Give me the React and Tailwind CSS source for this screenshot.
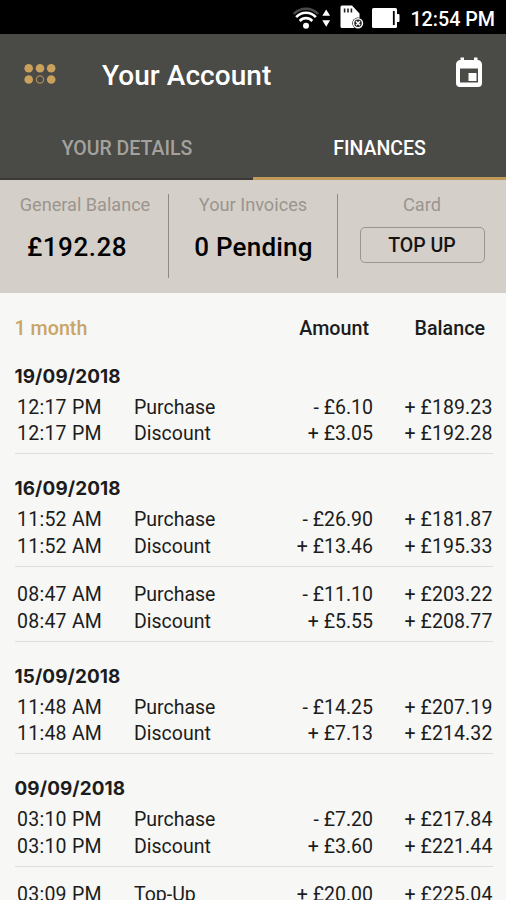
const groups = [
  {
    date: "19/09/2018",
    rows: [
      ["12:17 PM", "Purchase", "- £6.10", "+ £189.23"],
      ["12:17 PM", "Discount", "+ £3.05", "+ £192.28"],
    ],
  },
  {
    date: "16/09/2018",
    rows: [
      ["11:52 AM", "Purchase", "- £26.90", "+ £181.87"],
      ["11:52 AM", "Discount", "+ £13.46", "+ £195.33"],
    ],
  },
  {
    rows: [
      ["08:47 AM", "Purchase", "- £11.10", "+ £203.22"],
      ["08:47 AM", "Discount", "+ £5.55", "+ £208.77"],
    ],
  },
  {
    date: "15/09/2018",
    rows: [
      ["11:48 AM", "Purchase", "- £14.25", "+ £207.19"],
      ["11:48 AM", "Discount", "+ £7.13", "+ £214.32"],
    ],
  },
  {
    date: "09/09/2018",
    rows: [
      ["03:10 PM", "Purchase", "- £7.20", "+ £217.84"],
      ["03:10 PM", "Discount", "+ £3.60", "+ £221.44"],
    ],
  },
  {
    rows: [["03:09 PM", "Top-Up", "+ £20.00", "+ £225.04"]],
  },
];

function StatusBar() {
  return (
    <div className="flex h-[34px] shrink-0 items-center justify-end bg-black pr-[11px] text-white">
      {/* wifi with traffic arrows */}
      <svg className="mt-px" width="38" height="24" viewBox="0 0 38 24" fill="none">
        <path d="M.8 8C7.500 1 18.500 1 25.200 8" stroke="#4a4a4a" strokeWidth="2.4" />
        <path d="M3.200 11.200C8.500 5.300 17.500 5.300 22.800 11.200" stroke="#fff" strokeWidth="2.6" />
        <path d="M6.700 15C10.300 11.200 15.700 11.200 19.300 15" stroke="#fff" strokeWidth="2.6" />
        <circle cx="13" cy="19.8" r="3" fill="#fff" />
        <path d="M33.2 3.500l3.900 6.200h-7.800zM33.200 20.800l3.900-6.500h-7.800z" fill="#fff" />
      </svg>
      {/* sim card */}
      <svg className="ml-[9px]" width="24" height="24" viewBox="0 0 24 24">
        <path d="M2 0.5h10l7.500 8V23H2a1.500 1.500 0 0 1-1.500-1.500V2A1.500 1.500 0 0 1 2 .5z" fill="#fff" />
        <path d="M4.600 3.500v4M8 3.500v4M11.400 3.500v4" stroke="#222" strokeWidth="1.600" />
        <circle cx="18" cy="18.300" r="5.700" fill="#000" />
        <circle cx="18" cy="18.300" r="4.500" fill="#222" stroke="#fff" strokeWidth="1.500" />
        <path d="M16 16.300l4 4M20 16.300l-4 4" stroke="#fff" strokeWidth="1.500" />
      </svg>
      {/* battery */}
      <svg className="ml-[8px] mt-[2px]" width="28" height="20" viewBox="0 0 28 20">
        <rect x="0" y="0" width="25" height="20" rx="1.500" fill="#fff" />
        <rect x="24" y="6" width="3.500" height="8" rx="1" fill="#fff" />
        <path d="M21.800 3v14" stroke="#000" strokeWidth="1.800" />
      </svg>
      <span className="ml-[10.5px] mt-[6px] text-[19.700px] leading-none font-medium">12:54 PM</span>
    </div>
  );
}

function MenuIcon() {
  return (
    <svg className="-mt-[3px]" width="32" height="22" viewBox="0 0 32 22" fill="#c9a05c">
      <circle cx="4.700" cy="5.200" r="4.300" />
      <circle cx="16" cy="5.200" r="4.300" />
      <circle cx="27.200" cy="5.200" r="4.300" />
      <circle cx="4.700" cy="16.500" r="4.300" />
      <circle cx="16" cy="16.500" r="3.600" fill="none" stroke="#a88a58" strokeWidth="1.300" />
      <circle cx="27.200" cy="16.500" r="4.300" />
    </svg>
  );
}

function CalendarIcon() {
  return (
    <svg className="-mt-[5px]" width="28" height="31" viewBox="0 0 28 31">
      <path
        fillRule="evenodd"
        fill="#fff"
        d="M5.500 .5h3.500v2.500h10V.5h3.500v2.500a4.500 4.500 0 0 1 4.500 4.500V26a4 4 0 0 1-4 4h-18a4 4 0 0 1-4-4V7.500a4.500 4.500 0 0 1 4.500-4.500zM5 11.500v14h18v-14z"
      />
      <rect x="13.500" y="16" width="8" height="8" fill="#fff" />
    </svg>
  );
}

function Header() {
  return (
    <div className="h-[146px] shrink-0 bg-[#4a4a46]">
      <div className="flex h-[82px] items-center pr-[23px] pl-[24px]">
        <MenuIcon />
        <h1 className="mt-[2px] ml-[46px] flex-1 text-[28px] leading-[36px] font-medium tracking-[0.05px] text-white">
          Your Account
        </h1>
        <CalendarIcon />
      </div>
      <div className="flex h-[64px] text-[19.500px] font-medium">
        <div className="flex w-[253px] items-center justify-center border-b-2 border-[#3b3a37] pt-[4px] pl-px text-[#a3a29d]">
          YOUR DETAILS
        </div>
        <div className="flex flex-1 items-center justify-center border-b-3 border-[#c09a58] pt-[5px] text-white">
          FINANCES
        </div>
      </div>
    </div>
  );
}

function Summary() {
  return (
    <div className="flex h-[112.5px] shrink-0 bg-[#d5cfc9] pt-[14px]">
      <div className="flex h-[84px] w-[169px] flex-col items-center border-r border-[#8f8a84]">
        <span className="ml-[2px] text-[18.100px] leading-[22px] text-[#9a958e]">General Balance</span>
        <span className="mt-[15px] mr-[14px] text-[26px] leading-[32px] font-medium tracking-[0.5px] text-black">
          £192.28
        </span>
      </div>
      <div className="flex h-[84px] w-[169px] flex-col items-center border-r border-[#8f8a84]">
        <span className="text-[18.200px] leading-[22px] text-[#9a958e]">Your Invoices</span>
        <span className="mt-[15px] ml-px text-[26px] leading-[32px] font-medium tracking-[0.2px] text-black">
          0 Pending
        </span>
      </div>
      <div className="flex flex-1 flex-col items-center">
        <span className="text-[18.200px] leading-[22px] text-[#9a958e]">Card</span>
        <button className="mt-[11px] h-[36px] w-[125px] rounded-[5px] border-[1.500px] border-[#9a968e] pt-[2px] text-[19.500px] leading-none font-medium text-[#151515]">
          TOP UP
        </button>
      </div>
    </div>
  );
}

function Group({ date, rows }) {
  return (
    <div className="border-b border-[#dededc] pt-[15px] pb-[5.700px]">
      {date && (
        <div className="h-[37.500px] pt-[8.300px] font-['Inter',sans-serif] text-[18.900px] leading-[24px] font-bold tracking-[0.1px]">
          {date}
        </div>
      )}
      {rows.map(([time, type, amount, balance]) => (
        <div key={time + type} className="flex h-[26.670px] items-center text-[19.500px]">
          <span className="w-[119.500px] pl-[2.500px] tracking-[0.250px]">{time}</span>
          <span className="flex-1">{type}</span>
          <span className="w-[100px] text-right">{amount}</span>
          <span className="w-[120px] pr-[0.5px] text-right tracking-[0.100px]">{balance}</span>
        </div>
      ))}
    </div>
  );
}

export default function App() {
  return (
    <div className="flex h-[900px] w-[506px] flex-col overflow-hidden bg-[#f7f7f5] font-['Roboto',sans-serif] text-[#1c1c1c]">
      <StatusBar />
      <Header />
      <Summary />
      <div className="pr-[13px] pl-[14.500px]">
        <div className="flex h-[49px] items-center pt-[24px] text-[19.700px] font-medium">
          <span className="flex-1 text-[#c9a566]">1 month</span>
          <span className="w-[100px] text-right">Amount</span>
          <span className="w-[124px] pr-[8px] text-right">Balance</span>
        </div>
        {groups.map((group, i) => (
          <Group key={i} {...group} />
        ))}
      </div>
    </div>
  );
}
